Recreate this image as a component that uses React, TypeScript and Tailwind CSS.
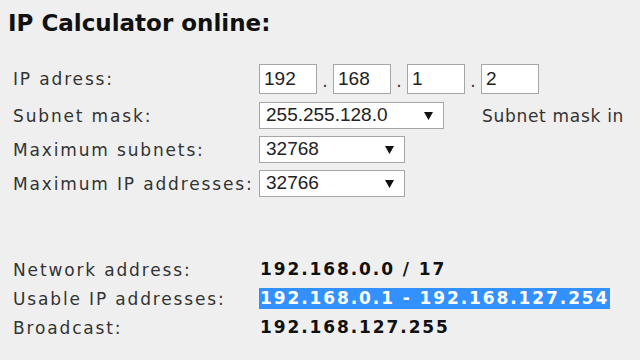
import React from "react";

const labelCls =
  "w-[246px] shrink-0 text-[17px] leading-[20px] tracking-[1.85px] text-[#333333] whitespace-nowrap";

function Arrow() {
  return (
    <svg width="9" height="8" viewBox="0 0 9 8" className="shrink-0">
      <path d="M0 0 H9 L4.5 8 Z" fill="#111" />
    </svg>
  );
}

function FakeSelect({ value, width }: { value: string; width: string }) {
  return (
    <div
      className={`${width} shrink-0 h-[27px] bg-white border border-[#a6a6a6] flex items-center justify-between pl-[6px] pr-[10px] font-['Liberation_Sans',Arial,sans-serif] text-[19px] text-[#222222]`}
    >
      <span>{value}</span>
      <Arrow />
    </div>
  );
}

function OctetBox({ value }: { value: string }) {
  return (
    <div className="w-[58px] h-[30px] shrink-0 bg-white border border-[#a6a6a6] flex items-center pl-[4px] font-['Liberation_Sans',Arial,sans-serif] text-[19px] text-[#222222]">
      {value}
    </div>
  );
}

function Dot() {
  return (
    <span className="w-[16px] flex justify-center self-end pb-[3px] text-[17px] leading-[20px] text-[#333333]">
      .
    </span>
  );
}

const valueCls =
  "text-[17px] leading-[21px] font-bold tracking-[1.9px] whitespace-nowrap";

export default function App() {
  return (
    <div className="w-[640px] h-[360px] overflow-hidden bg-[#efefef] font-['DejaVu_Sans',Verdana,sans-serif]">
      <h1 className="pt-[9px] pl-[8px] text-[23px] leading-[28px] font-bold text-[#111111] whitespace-nowrap">
        IP Calculator online:
      </h1>

      <div className="mt-[27px] pl-[13px] flex flex-col">
        <div className="flex items-center h-[30px]">
          <div className={labelCls}>IP adress:</div>
          <div className="flex items-stretch h-[30px]">
            <OctetBox value="192" />
            <Dot />
            <OctetBox value="168" />
            <Dot />
            <OctetBox value="1" />
            <Dot />
            <OctetBox value="2" />
          </div>
        </div>

        <div className="flex items-center h-[27px] mt-[8px]">
          <div className={labelCls}>Subnet mask:</div>
          <FakeSelect value="255.255.128.0" width="w-[185px]" />
          <div className="ml-[38px] text-[17px] leading-[20px] tracking-[0.7px] text-[#333333] whitespace-nowrap">
            Subnet mask in
          </div>
        </div>

        <div className="flex items-center h-[27px] mt-[7px]">
          <div className={labelCls}>Maximum subnets:</div>
          <FakeSelect value="32768" width="w-[146px]" />
        </div>

        <div className="flex items-center h-[27px] mt-[7px]">
          <div className={labelCls}>Maximum IP addresses:</div>
          <FakeSelect value="32766" width="w-[146px]" />
        </div>
      </div>

      <div className="mt-[62px] pl-[13px] flex flex-col gap-[8px]">
        <div className="flex items-center h-[21px]">
          <div className={labelCls}>Network address:</div>
          <div className={`pl-[1px] text-[#111111] ${valueCls}`}>192.168.0.0 / 17</div>
        </div>
        <div className="flex items-center h-[21px]">
          <div className={labelCls}>Usable IP addresses:</div>
          <div className={`pl-[1px] pr-[1px] bg-[#3390ff] text-white ${valueCls}`}>
            192.168.0.1 - 192.168.127.254
          </div>
        </div>
        <div className="flex items-center h-[21px]">
          <div className={labelCls}>Broadcast:</div>
          <div className={`pl-[1px] text-[#111111] ${valueCls}`}>192.168.127.255</div>
        </div>
      </div>
    </div>
  );
}
